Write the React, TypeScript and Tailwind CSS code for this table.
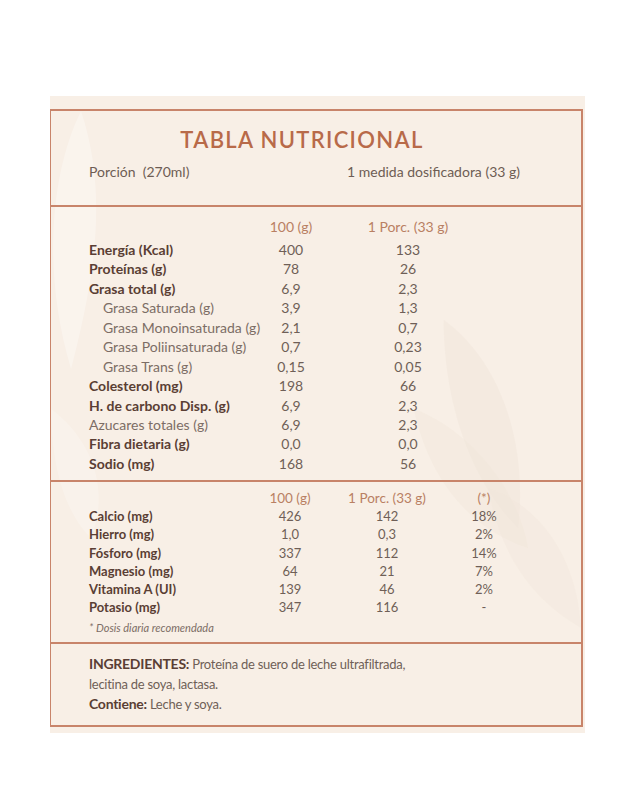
import React from "react"

const font = { fontFamily: "Lato, 'Open Sans', sans-serif" }

type Row = { label: string; a: string; b: string; kind: "bold" | "sub" | "light" }

const mainRows: Row[] = [
  { label: "Energía (Kcal)", a: "400", b: "133", kind: "bold" },
  { label: "Proteínas (g)", a: "78", b: "26", kind: "bold" },
  { label: "Grasa total (g)", a: "6,9", b: "2,3", kind: "bold" },
  { label: "Grasa Saturada (g)", a: "3,9", b: "1,3", kind: "sub" },
  { label: "Grasa Monoinsaturada (g)", a: "2,1", b: "0,7", kind: "sub" },
  { label: "Grasa Poliinsaturada (g)", a: "0,7", b: "0,23", kind: "sub" },
  { label: "Grasa Trans (g)", a: "0,15", b: "0,05", kind: "sub" },
  { label: "Colesterol (mg)", a: "198", b: "66", kind: "bold" },
  { label: "H. de carbono Disp. (g)", a: "6,9", b: "2,3", kind: "bold" },
  { label: "Azucares totales (g)", a: "6,9", b: "2,3", kind: "light" },
  { label: "Fibra dietaria (g)", a: "0,0", b: "0,0", kind: "bold" },
  { label: "Sodio (mg)", a: "168", b: "56", kind: "bold" },
]

const minerals = [
  { label: "Calcio (mg)", a: "426", b: "142", c: "18%" },
  { label: "Hierro (mg)", a: "1,0", b: "0,3", c: "2%" },
  { label: "Fósforo (mg)", a: "337", b: "112", c: "14%" },
  { label: "Magnesio (mg)", a: "64", b: "21", c: "7%" },
  { label: "Vitamina A (UI)", a: "139", b: "46", c: "2%" },
  { label: "Potasio (mg)", a: "347", b: "116", c: "-" },
]

// faint leaf shapes printed behind the table
const Leaves = () => (
  <svg className="absolute inset-0 w-full h-full pointer-events-none" viewBox="0 0 533 618" fill="none">
    <path d="M30 0 C 0 60, -10 160, 20 260 C 40 180, 60 90, 30 0 Z" fill="#ffffff" opacity="0.3" />
    <path d="M0 300 C 40 330, 60 380, 40 430 C 10 400, 0 350, 0 300 Z" fill="#ffffff" opacity="0.2" />
    <path d="M395 210 C 450 250, 480 330, 470 420 C 420 370, 395 290, 395 210 Z" fill="#f0e5da" opacity="0.45" />
    <path d="M365 300 C 420 320, 470 380, 480 440 C 420 420, 380 370, 365 300 Z" fill="#f0e5da" opacity="0.4" />
    <path d="M440 380 C 500 400, 530 460, 533 520 C 480 490, 450 440, 440 380 Z" fill="#f0e5da" opacity="0.35" />
  </svg>
)

export default function App() {
  return (
    <div className="w-[635px] h-[810px] bg-white pt-[96px] pl-[50px]" style={font}>
      <div className="w-[535px] h-[637px] bg-[#f8efe6] pt-[13px] pr-[2px]">
        <div className="relative w-[533px] h-[618px] border-2 border-l border-[#c8846a] flex flex-col">
          <Leaves />

          {/* header */}
          <div className="relative h-[96px] border-b-2 border-[#c8846a] flex flex-col items-center">
            <h1 className="mt-[16px] mr-[28px] text-[22px] leading-[26px] font-semibold tracking-[0.06em] text-[#b86a49]">
              TABLA NUTRICIONAL
            </h1>
            <div className="w-full flex justify-between pl-[38px] pr-[61px] mt-[9px] text-[14px] leading-[20px] text-[#6e5d54]">
              <span>Porción&nbsp; (270ml)</span>
              <span>1 medida dosificadora (33 g)</span>
            </div>
          </div>

          {/* macros */}
          <div className="relative h-[275px] border-b-2 border-[#c8846a] pl-[38px] pt-[10px] text-[14px] leading-[19.45px]">
            <div className="flex text-[#b98063] mb-[3.5px]">
              <span className="w-[162px]" />
              <span className="w-[80px] text-center">100 (g)</span>
              <span className="w-[100px] ml-[27px] text-center">1 Porc. (33 g)</span>
            </div>
            {mainRows.map((r) => (
              <div key={r.label} className="flex text-[#6f5f57]">
                <span
                  className={
                    r.kind === "bold"
                      ? "w-[162px] whitespace-nowrap font-bold text-[#5a3e34]"
                      : r.kind === "sub"
                        ? "w-[162px] whitespace-nowrap pl-[14px] text-[#7c6d65]"
                        : "w-[162px] whitespace-nowrap text-[#7c6d65]"
                  }
                >
                  {r.label}
                </span>
                <span className="w-[80px] text-center">{r.a}</span>
                <span className="w-[100px] ml-[27px] text-center">{r.b}</span>
              </div>
            ))}
          </div>

          {/* minerals */}
          <div className="relative h-[162px] border-b-2 border-[#c8846a] pl-[38px] pt-[7px] text-[13px] leading-[18.2px]">
            <div className="flex text-[#b98063] text-[13.5px]">
              <span className="w-[161px]" />
              <span className="w-[80px] text-center">100 (g)</span>
              <span className="w-[80px] ml-[17px] text-center whitespace-nowrap">1 Porc. (33 g)</span>
              <span className="w-[80px] ml-[17px] text-center">(*)</span>
            </div>
            {minerals.map((m) => (
              <div key={m.label} className="flex text-[#6f5f57]">
                <span className="w-[161px] font-bold text-[#5a3e34]">{m.label}</span>
                <span className="w-[80px] text-center">{m.a}</span>
                <span className="w-[80px] ml-[17px] text-center">{m.b}</span>
                <span className="w-[80px] ml-[17px] text-center">{m.c}</span>
              </div>
            ))}
            <p className="mt-[3px] text-[11px] leading-[18px] italic text-[#7c6d65]">* Dosis diaria recomendada</p>
          </div>

          {/* ingredients */}
          <div className="relative flex-1 pl-[38px] pt-[10px] text-[13px] leading-[19.5px] tracking-[-0.02em] text-[#6f5f57]">
            <p>
              <span className="text-[14px] font-bold text-[#5a3e34]">INGREDIENTES:</span> Proteína de suero de leche ultrafiltrada,
            </p>
            <p>lecitina de soya, lactasa.</p>
            <p>
              <span className="text-[14px] font-bold text-[#5a3e34]">Contiene:</span> Leche y soya.
            </p>
          </div>
        </div>
      </div>
    </div>
  )
}
